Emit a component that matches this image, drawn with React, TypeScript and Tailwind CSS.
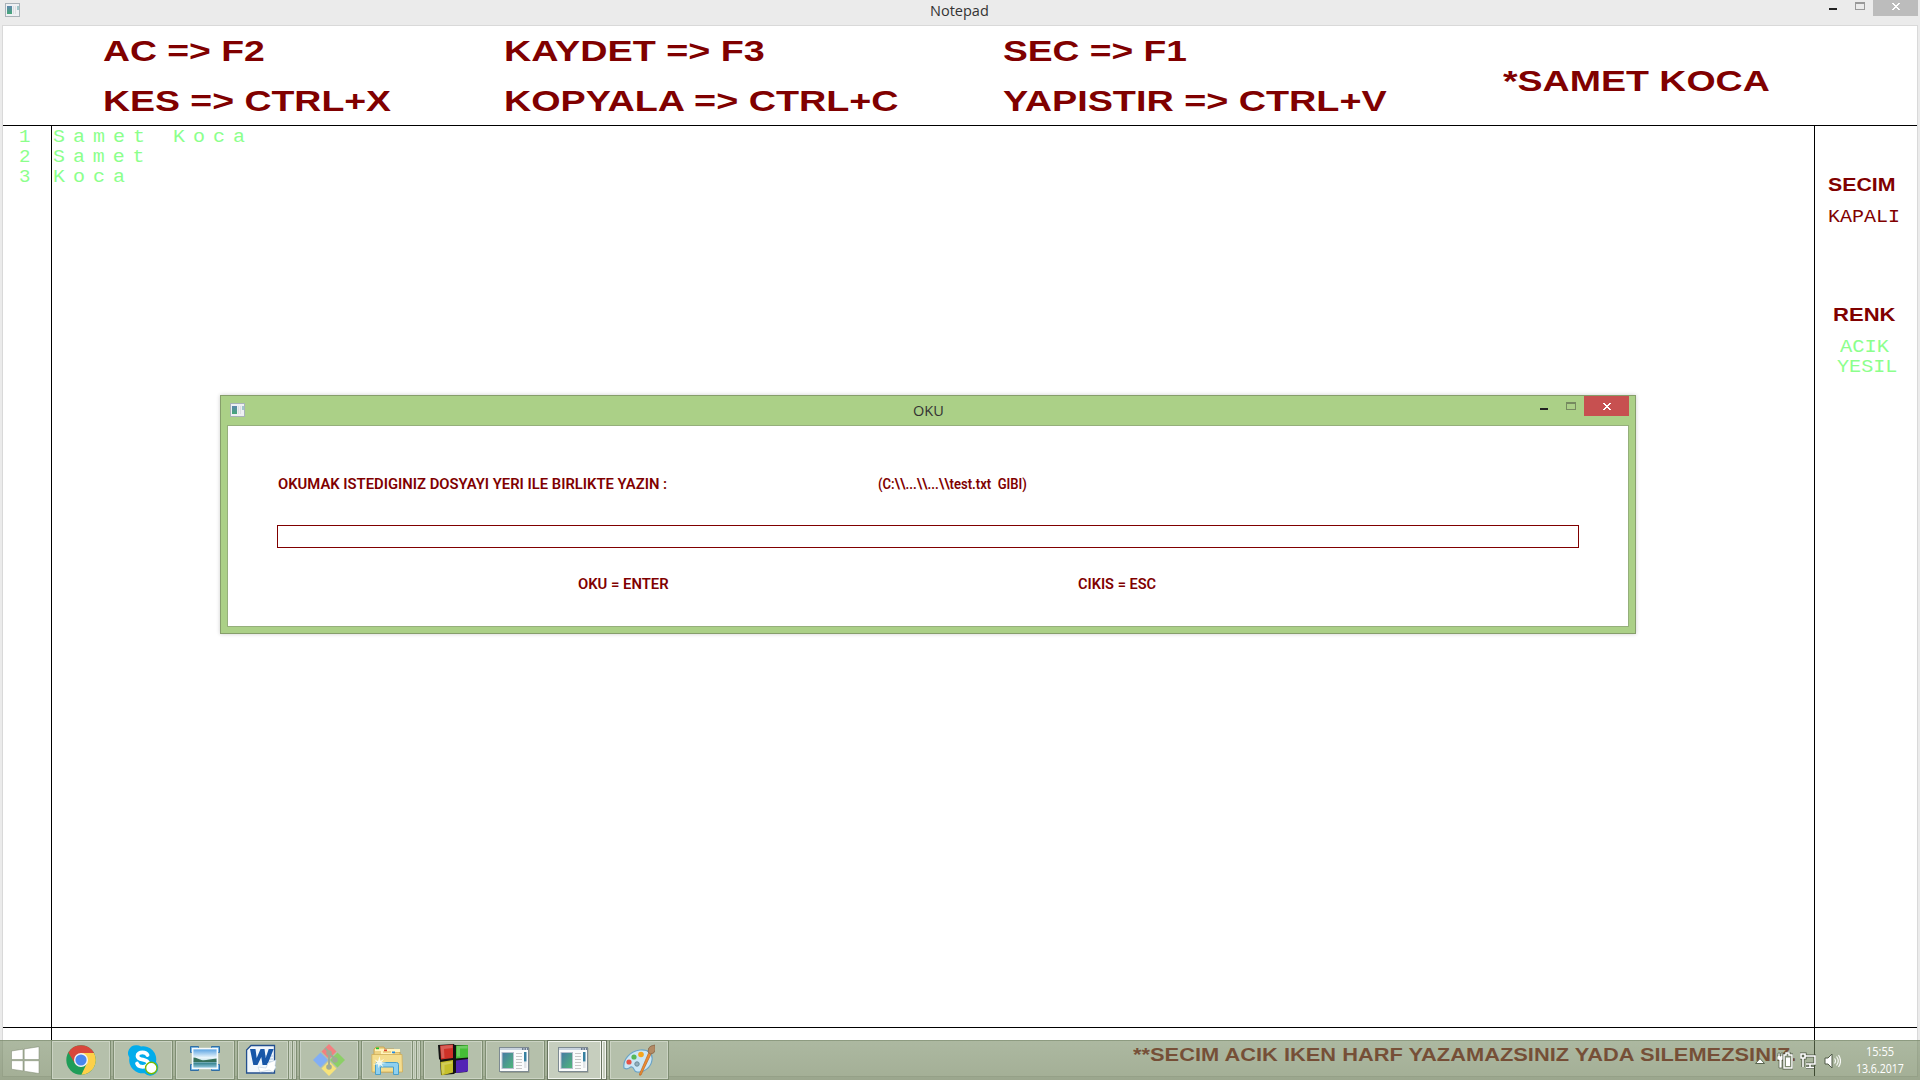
import { useLayoutEffect, useRef, type ReactNode } from "react";

/** One line of text stretched horizontally to fill the width of its box. */
function FitText({ children, className }: { children: string; className: string }) {
  const outer = useRef<HTMLSpanElement>(null);
  const inner = useRef<HTMLSpanElement>(null);
  useLayoutEffect(() => {
    const o = outer.current;
    const i = inner.current;
    if (o && i && i.offsetWidth > 0) {
      i.style.transform = `scaleX(${o.offsetWidth / i.offsetWidth})`;
    }
  }, []);
  return (
    <span ref={outer} className={`block shrink-0 whitespace-pre ${className}`}>
      <span ref={inner} className="inline-block origin-left align-top">
        {children}
      </span>
    </span>
  );
}

const heading = "h-[50px] font-['Liberation_Sans',sans-serif] text-[29.5px] font-bold leading-[50px] text-[#800000]";
const small = "h-5 font-['Liberation_Sans',sans-serif] text-[17.5px] font-bold leading-5 text-[#800000]";
const mono = "h-5 font-['Liberation_Mono',monospace] text-[17.5px] leading-5";
const system = "font-['Roboto',sans-serif] text-[14px] font-semibold leading-5 text-[#800000]";
const caption = "font-['Open_Sans',sans-serif] text-[14.5px] leading-5";

function AppIcon() {
  return (
    <svg className="block" width="15" height="14" viewBox="0 0 15 14">
      <defs>
        <linearGradient id="mini" x1="0" y1="0" x2="0" y2="1">
          <stop offset="0" stopColor="#5d86ac" />
          <stop offset="1" stopColor="#46a878" />
        </linearGradient>
      </defs>
      <rect x="0.5" y="0.5" width="14" height="13" fill="#eef0f3" stroke="#a9b2b8" />
      <rect x="2" y="3" width="5" height="8" fill="url(#mini)" />
      <path d="M8.5 3v8M10.5 3v8" stroke="#dcdfe2" />
      <rect x="12" y="3" width="2" height="4" fill="#9fc6c8" />
    </svg>
  );
}

function Minimize({ className }: { className: string }) {
  return <span className={`block h-0.5 w-2 bg-[#222] ${className}`} />;
}

function Maximize({ className }: { className: string }) {
  return <span className={`block h-2 w-2.5 border border-t-2 ${className}`} />;
}

function CloseCross() {
  return (
    <svg width="8" height="7" viewBox="0 0 8 7" shapeRendering="crispEdges" fill="#fff">
      <path d="M0 0h2v1h1v1h2V1h1V0h2v1H7v1H6v1H5v1h1v1h1v1h1v1H6V6H5V5H3v1H2v1H0V6h1V5h1V4h1V3H2V2H1V1H0z" />
    </svg>
  );
}

function ChromeIcon() {
  return (
    <svg width="32" height="32" viewBox="0 0 32 32">
      <circle cx="16" cy="16" r="14.7" fill="#1f9d58" />
      <path d="M16 9H29a14.7 14.7 0 0 1-12.6 21.7L22 19z" fill="#fdd04a" />
      <path d="M3.3 8.6 10 19.5 16 9h13A14.7 14.7 0 0 0 3.3 8.6" fill="#d8473b" />
      <circle cx="16" cy="16" r="7" fill="#f4f4f4" />
      <circle cx="16" cy="16" r="5.6" fill="#4a87ee" />
    </svg>
  );
}

function SkypeIcon() {
  return (
    <svg width="32" height="32" viewBox="0 0 32 32">
      <path d="M9 1.2a8 8 0 0 1 5 1.2A13.2 13.2 0 0 1 29 18a8 8 0 0 1-11.5 11.2A13.3 13.3 0 0 1 2.4 13.7 8 8 0 0 1 9 1.2z" fill="#02aceb" />
      <path
        d="M20.5 11c-.8-2-2.6-2.7-5-2.7-2.8 0-5 1.3-5 3.6 0 5 10.500 2.500 10.500 7.200 0 2.400-2.200 3.700-5.300 3.700-2.900 0-5-1.100-5.700-3.300"
        fill="none"
        stroke="#fff"
        strokeWidth="3.8"
        strokeLinecap="round"
      />
      <circle cx="24.3" cy="24" r="5.7" fill="#fff" stroke="#7db800" strokeWidth="1.4" />
    </svg>
  );
}

function PhotoIcon() {
  return (
    <svg width="32" height="32" viewBox="0 0 32 32">
      <defs>
        <linearGradient id="sky" x1="0" y1="0" x2="0" y2="1">
          <stop offset="0" stopColor="#4d9be0" />
          <stop offset=".45" stopColor="#e8f5fb" />
          <stop offset=".6" stopColor="#cfe6ee" />
          <stop offset=".75" stopColor="#3f8a96" />
          <stop offset="1" stopColor="#9fd0e8" />
        </linearGradient>
      </defs>
      <g fill="#5ba5dd" stroke="#27679f" strokeWidth=".9">
        <path d="M1.500 2.500h8v6h-8zM30.500 2.500h-8v6h8zM1.500 26.500h8v-6h-8zM30.500 26.500h-8v-6h8z" />
      </g>
      <rect x="3.600" y="4.600" width="24.800" height="19.800" fill="url(#sky)" stroke="#f6fafc" strokeWidth="1.600" />
      <path d="M4.500 13.500c3 0 5 1.500 8 2.500s9-1 15-1.500v3.500h-23z" fill="#35705a" />
    </svg>
  );
}

function WordIcon() {
  return (
    <svg width="32" height="32" viewBox="0 0 32 32">
      <path d="M6 1.500h23.500v27.500H1.600V6z" fill="#f1f7fd" stroke="#234f8e" strokeWidth="1.300" />
      <path d="M20 12h8M20 15h8M20 18h8" stroke="#a9c3df" strokeWidth="1.200" />
      <path d="M5 5h5.500l1.200 9L15.500 5h4l1.200 9 3-9h5l-6.500 16h-4.700l-1.200-8-3.800 8H8.300z" fill="#1857a8" />
      <path d="m13 23 8 1 2-5 8-3-1 6 1 1-3 5-4-2-9 2z" fill="#fff" stroke="#c3d4e4" strokeWidth=".7" />
    </svg>
  );
}

function GitIcon() {
  return (
    <svg width="32" height="32" viewBox="0 0 32 32">
      <path d="M16 0l7.500 7.500-7.500 7.500-7.500-7.500z" fill="#f28080" />
      <path d="M24.500 8.500l7.500 7.500-7.500 7.500-7.500-7.500z" fill="#8ccf66" />
      <path d="M7.500 8.500l7.500 7.500-7.500 7.500-7.500-7.500z" fill="#82aef4" />
      <path d="M16 17l7.500 7.500-7.500 7.500-7.500-7.500z" fill="#f7e37a" />
      <g stroke="#a0aa96" strokeWidth="2" fill="#a0aa96">
        <path d="M12 4l4 4v16M16 9l6 6" fill="none" />
        <circle cx="16" cy="9" r="1.800" />
        <circle cx="22" cy="16" r="1.800" />
        <circle cx="16" cy="23" r="1.800" />
      </g>
    </svg>
  );
}

function ExplorerIcon() {
  return (
    <svg width="32" height="32" viewBox="0 0 32 32">
      <path d="M3 28V5l2-2h8l1 2h9l1 3h5v20z" fill="#edd384" stroke="#c79d45" strokeWidth=".8" />
      <path d="M4 6h25M11 5v5h10V7h8" stroke="#fff3bd" strokeWidth="2" fill="none" />
      <rect x="5" y="3.500" width="3" height="1.700" fill="#1fbf31" />
      <rect x="13" y="5.500" width="3" height="1.700" fill="#d8452c" />
      <rect x="21" y="7.500" width="3" height="1.700" fill="#2389df" />
      <path d="M.8 10.500H31L31.500 28H1z" fill="#f4dd8e" stroke="#d0ad58" strokeWidth=".8" />
      <path d="M4.500 30.500V20.500q0-2 2-2h19q2 0 2 2v10h-5V23H9.500v7.500z" fill="#8fd0ef" stroke="#4a9fc9" />
      <path d="m8.500 12 1 5 4-2.500-3 3.500 5 1-5 .8 2 3.500-3.500-2.500-1.500 3.500-.5-4-5 .5 4-2-2.500-3.500 3.500 2z" fill="#fffef0" opacity=".9" />
    </svg>
  );
}

function BlocksIcon() {
  return (
    <svg width="32" height="32" viewBox="0 0 32 32">
      <path d="M1 1l16-1 .5 1H31v14l-1 1v12l-12 1-1 1-13 1-1-15-1-1z" fill="#131313" />
      <path d="M3 1.500 16 .5V14L4 15.500z" fill="#cf3127" />
      <path d="M19 1.500 31 1V13.500L19 14.500z" fill="#45be36" />
      <path d="M3.500 18 16 16v12.500L4.500 31.500z" fill="#c5bf2b" />
      <path d="M19 16.500 31 15V27.500l-12 1.500z" fill="#5325b5" />
      <path d="M3.500 2l12-1v3L7 5l.5 9H4.500zM20 2h10.500v2.500H23v8h-3zM4.500 19l10.500-1.500v2L7.500 21v8l-2.500 1z" fill="#fff" opacity=".22" />
    </svg>
  );
}

function ProgramIcon() {
  return (
    <svg width="32" height="32" viewBox="0 0 32 32">
      <defs>
        <linearGradient id="pane" x1="0" y1="0" x2="1" y2="1">
          <stop offset="0" stopColor="#4779a5" />
          <stop offset="1" stopColor="#4fb878" />
        </linearGradient>
      </defs>
      <rect x="2.500" y="4" width="29" height="25" fill="#000" opacity=".18" />
      <rect x="1.500" y="3.500" width="29" height="24" fill="#fafbfb" stroke="#7d8a92" />
      <path d="M2 5h28" stroke="#c8d3de" strokeWidth="2" />
      <path d="M24 5h1.500M26.500 5H28M29 5h1" stroke="#4e6076" strokeWidth="1.500" />
      <rect x="4" y="8.500" width="11.500" height="16" fill="url(#pane)" stroke="#b8bfce" />
      <path d="M18 9.500h6M18 12.500h6M18 15.500h6M18 18.500h6M18 21.500h6M18 24.500h6" stroke="#c7c7c7" />
      <rect x="26" y="8" width="2.500" height="9.500" fill="#3680a0" />
      <rect x="26" y="18" width="2.500" height="6" fill="#e2e5e8" />
    </svg>
  );
}

function PaintIcon() {
  return (
    <svg width="32" height="32" viewBox="0 0 32 32">
      <path d="M1 24C-.5 16 7 7 17 6c9-.8 13 4 12 10-1 8-9 13-15 12-4-.6-2-4-5-5-3-.8-3 4-8 1z" fill="#cbe6f5" stroke="#6ba3c6" strokeWidth="1.200" />
      <circle cx="14" cy="20" r="2.200" fill="#93aebb" stroke="#698c9c" />
      <circle cx="6" cy="18" r="2.600" fill="#e75245" />
      <circle cx="11" cy="13" r="2.600" fill="#55b857" />
      <circle cx="18" cy="10.500" r="2.800" fill="#f5a51d" />
      <path d="M26 8 28.500 9 18 31q-2 1-1.500-1z" fill="#ed8b32" stroke="#b96825" strokeWidth=".7" />
      <path d="M25 8q0-5 3-6l4-1 .3 5q-1 4-5 4z" fill="#b38a63" stroke="#826044" strokeWidth=".7" />
    </svg>
  );
}

function TaskButton({ children, width, stack = 0, active = false }: { children: ReactNode; width: string; stack?: number; active?: boolean }) {
  const tone = active
    ? "border-[#68745f] bg-[#c6cebe] shadow-[inset_0_0_0_1px_#f2f5ef]"
    : "border-[#7f8e73] bg-[#b5c0ab] shadow-[inset_0_0_0_1px_#cbd3c3]";
  return (
    <div className="mr-0.5 flex h-10">
      <div className={`flex h-10 items-center justify-center border ${width} ${tone}`}>{children}</div>
      {Array.from({ length: stack }, (_, n) => (
        <div key={n} className={`h-10 border border-l-0 ${stack === 1 ? "w-[5px]" : "w-1"} ${tone}`} />
      ))}
    </div>
  );
}

function Tray() {
  return (
    <div className="flex h-10 items-start">
      <svg className="mt-4 mr-[11px] block" width="12" height="10" viewBox="0 0 12 10">
        <path d="M1.500 7.500 6 2.500l4.500 5z" fill="#fff" stroke="#5a654f" />
      </svg>
      <svg className="mt-3 mr-[7px] block" width="16" height="18" viewBox="0 0 16 18">
        <path d="M1 1v3H0v4h2v8h3V8h2V4H6V1H4v3H3V1z" fill="#fff" stroke="#515b48" strokeWidth=".7" />
        <path d="M7 3h2V1h3v2h3v13H7z" fill="none" stroke="#515b48" strokeWidth="3" />
        <path d="M7 3h2V1h3v2h3v13H7z" fill="#7e8a73" stroke="#fff" strokeWidth="1.400" />
        <rect x="9" y="5.500" width="4" height="8.500" fill="#fff" />
      </svg>
      <svg className="mt-3 mr-2 block" width="16" height="18" viewBox="0 0 16 18">
        <path d="M5 4h10v8H6M10 12v3M6 15.500h8M1 2h4v4H1zM3 6v9" fill="none" stroke="#515b48" strokeWidth="3.200" />
        <path d="M5 4h10v8H6M10 12v3M6 15.500h8M1 2h4v4H1zM3 6v9" fill="none" stroke="#fff" strokeWidth="1.600" />
      </svg>
      <svg className="mt-3 mr-[15px] block" width="17" height="18" viewBox="0 0 17 18">
        <path d="M1 6h3l4-4v14l-4-4H1z" fill="#fff" stroke="#515b48" />
        <path d="M10.500 6.500q2 2.500 0 5M12.500 4.500q3.500 4.500 0 9M14.500 3q4 6 0 12" fill="none" stroke="#f7f9f5" strokeWidth="1.200" />
      </svg>
      <div className="flex w-[48px] flex-col items-center pt-[3px] font-['Open_Sans',sans-serif] text-[13px] leading-[17px] text-white">
        <FitText className="h-[17px] w-7">15:55</FitText>
        <FitText className="h-[17px] w-12">13.6.2017</FitText>
      </div>
    </div>
  );
}

function Taskbar() {
  return (
    <div className="absolute inset-x-0 bottom-0 z-20 flex h-10 border-t border-[#7f8e73]/60 bg-linear-to-b from-[#758962]/60 to-[#66794f]/60">
      <div className="-mt-px flex h-10">
        <div className="flex w-[51px] items-center pl-[11px]">
          <svg width="29" height="28" viewBox="0 0 29 28">
            <path d="M.5 5 12 3.200V13.500H.5zM13.200 3 28 .7v12.800H13.200zM.5 14.700H12v10.200L.5 23.200zM13.200 14.700H28v12.800l-14.800-2.300z" fill="#fff" stroke="#7a876e" strokeWidth=".5" />
          </svg>
        </div>
        <TaskButton width="w-[60px]"><ChromeIcon /></TaskButton>
        <TaskButton width="w-[60px]"><SkypeIcon /></TaskButton>
        <TaskButton width="w-[60px]"><PhotoIcon /></TaskButton>
        <TaskButton width="w-[52px] pr-1" stack={2}><WordIcon /></TaskButton>
        <TaskButton width="w-[60px]"><GitIcon /></TaskButton>
        <TaskButton width="w-[52px]" stack={2}><ExplorerIcon /></TaskButton>
        <TaskButton width="w-[60px] pr-px"><BlocksIcon /></TaskButton>
        <TaskButton width="w-[60px] pr-0.5"><ProgramIcon /></TaskButton>
        <TaskButton width="w-[55px] pr-[3px]" stack={1} active><ProgramIcon /></TaskButton>
        <TaskButton width="w-[60px]"><PaintIcon /></TaskButton>
      </div>
      <div className="-mt-px ml-auto pr-4">
        <Tray />
      </div>
    </div>
  );
}

function ReadDialog() {
  return (
    <div className="absolute top-[395px] left-[220px] z-10 flex h-[239px] w-[1416px] flex-col border border-[#869e6b] bg-[#abd087] px-1.5 pb-1.5 shadow-[0_0_4px_rgba(0,0,0,0.2)]">
      <div className="flex h-[29px] shrink-0 items-start pl-[3px]">
        <div className="w-[683px] pt-[7px]"><AppIcon /></div>
        <FitText className={`mt-[5px] h-5 w-[31px] text-[#333] ${caption}`}>OKU</FitText>
        <div className="ml-auto flex">
          <Minimize className="mt-3 mr-[18px]" />
          <Maximize className="mt-1.5 mr-2 border-[#768a60]" />
          <div className="flex h-5 w-[45px] items-center justify-center bg-[#c75050]"><CloseCross /></div>
        </div>
      </div>
      <div className="h-[202px] shrink-0 border border-[#95af7b] bg-white px-[49px] pt-12">
        <div className="flex">
          <FitText className={`ml-px w-[389px] ${system}`}>OKUMAK ISTEDIGINIZ DOSYAYI YERI ILE BIRLIKTE YAZIN :</FitText>
          <FitText className={`ml-[211px] w-[149px] ${system}`}>{"(C:\\\\...\\\\...\\\\test.txt  GIBI)"}</FitText>
        </div>
        <div className="mt-[31px] h-[23px] w-[1302px] border border-[#800000]" />
        <div className="mt-[26px] flex pl-[301px]">
          <FitText className={`w-[91px] ${system}`}>OKU = ENTER</FitText>
          <FitText className={`ml-[409px] w-[78px] ${system}`}>CIKIS = ESC</FitText>
        </div>
      </div>
    </div>
  );
}

export default function App() {
  return (
    <div className="relative flex h-[1080px] w-[1920px] flex-col overflow-hidden bg-[#ebebeb] px-0.5 pb-[3px]">
      <div className="flex h-[25px] shrink-0 items-start pl-[3px]">
        <div className="w-[925px] pt-[3px]"><AppIcon /></div>
        <FitText className={`mt-px h-5 w-[59px] text-[#333] ${caption}`}>Notepad</FitText>
        <div className="ml-auto flex">
          <Minimize className="mt-2 mr-[18px]" />
          <Maximize className="mt-0.5 mr-2 border-[#999]" />
          <div className="flex h-4 w-[45px] justify-center bg-[#bcbcbc] pt-[3px]"><CloseCross /></div>
        </div>
      </div>

      <div className="flex grow flex-col border border-[#d9d9d9] bg-white">
        <div className="grid h-[100px] shrink-0 grid-cols-[400px_500px_500px_1fr] border-b border-black pl-[100px]">
          <div>
            <FitText className={`w-[162px] ${heading}`}>{"AC => F2"}</FitText>
            <FitText className={`w-[288px] ${heading}`}>{"KES => CTRL+X"}</FitText>
          </div>
          <div className="pl-px">
            <FitText className={`w-[261px] ${heading}`}>{"KAYDET => F3"}</FitText>
            <FitText className={`w-[394px] ${heading}`}>{"KOPYALA => CTRL+C"}</FitText>
          </div>
          <div>
            <FitText className={`w-[184px] ${heading}`}>{"SEC => F1"}</FitText>
            <FitText className={`w-[384px] ${heading}`}>{"YAPISTIR => CTRL+V"}</FitText>
          </div>
          <div className="pt-[30px]">
            <FitText className={`w-[267px] ${heading}`}>*SAMET KOCA</FitText>
          </div>
        </div>

        <div className="flex h-[902px] shrink-0 border-b border-black">
          <div className="w-[49px] shrink-0 border-r border-black pl-4">
            <FitText className={`mt-px w-3 text-[#8cff8c] ${mono}`}>1</FitText>
            <FitText className={`w-3 text-[#8cff8c] ${mono}`}>2</FitText>
            <FitText className={`w-3 text-[#8cff8c] ${mono}`}>3</FitText>
          </div>
          <div className="grow pt-px pl-px">
            <FitText className={`w-[200px] tracking-[7px] text-[#8cff8c] ${mono}`}>Samet Koca</FitText>
            <FitText className={`w-[100px] tracking-[7px] text-[#8cff8c] ${mono}`}>Samet</FitText>
            <FitText className={`w-20 tracking-[7px] text-[#8cff8c] ${mono}`}>Koca</FitText>
          </div>
          <div className="w-[103px] shrink-0 border-l border-black pt-[49px] pl-[13px]">
            <FitText className={`w-[67px] ${small}`}>SECIM</FitText>
            <FitText className={`mt-3 w-[72px] text-[#800000] ${mono}`}>KAPALI</FitText>
            <FitText className={`mt-[78px] ml-[5px] w-[63px] ${small}`}>RENK</FitText>
            <FitText className={`mt-3 ml-3 w-[49px] text-[#8cff8c] ${mono}`}>ACIK</FitText>
            <FitText className={`ml-[9px] w-[61px] text-[#8cff8c] ${mono}`}>YESIL</FitText>
          </div>
        </div>

        <div className="flex grow">
          <div className="w-[49px] shrink-0 border-r border-black" />
          <div className="grow pt-[17px] pl-[1081px]">
            <FitText className={`w-[664px] ${small}`}>**SECIM ACIK IKEN HARF YAZAMAZSINIZ YADA SILEMEZSINIZ.</FitText>
          </div>
          <div className="w-[103px] shrink-0 border-l border-black" />
        </div>
      </div>

      <ReadDialog />
      <Taskbar />
    </div>
  );
}
